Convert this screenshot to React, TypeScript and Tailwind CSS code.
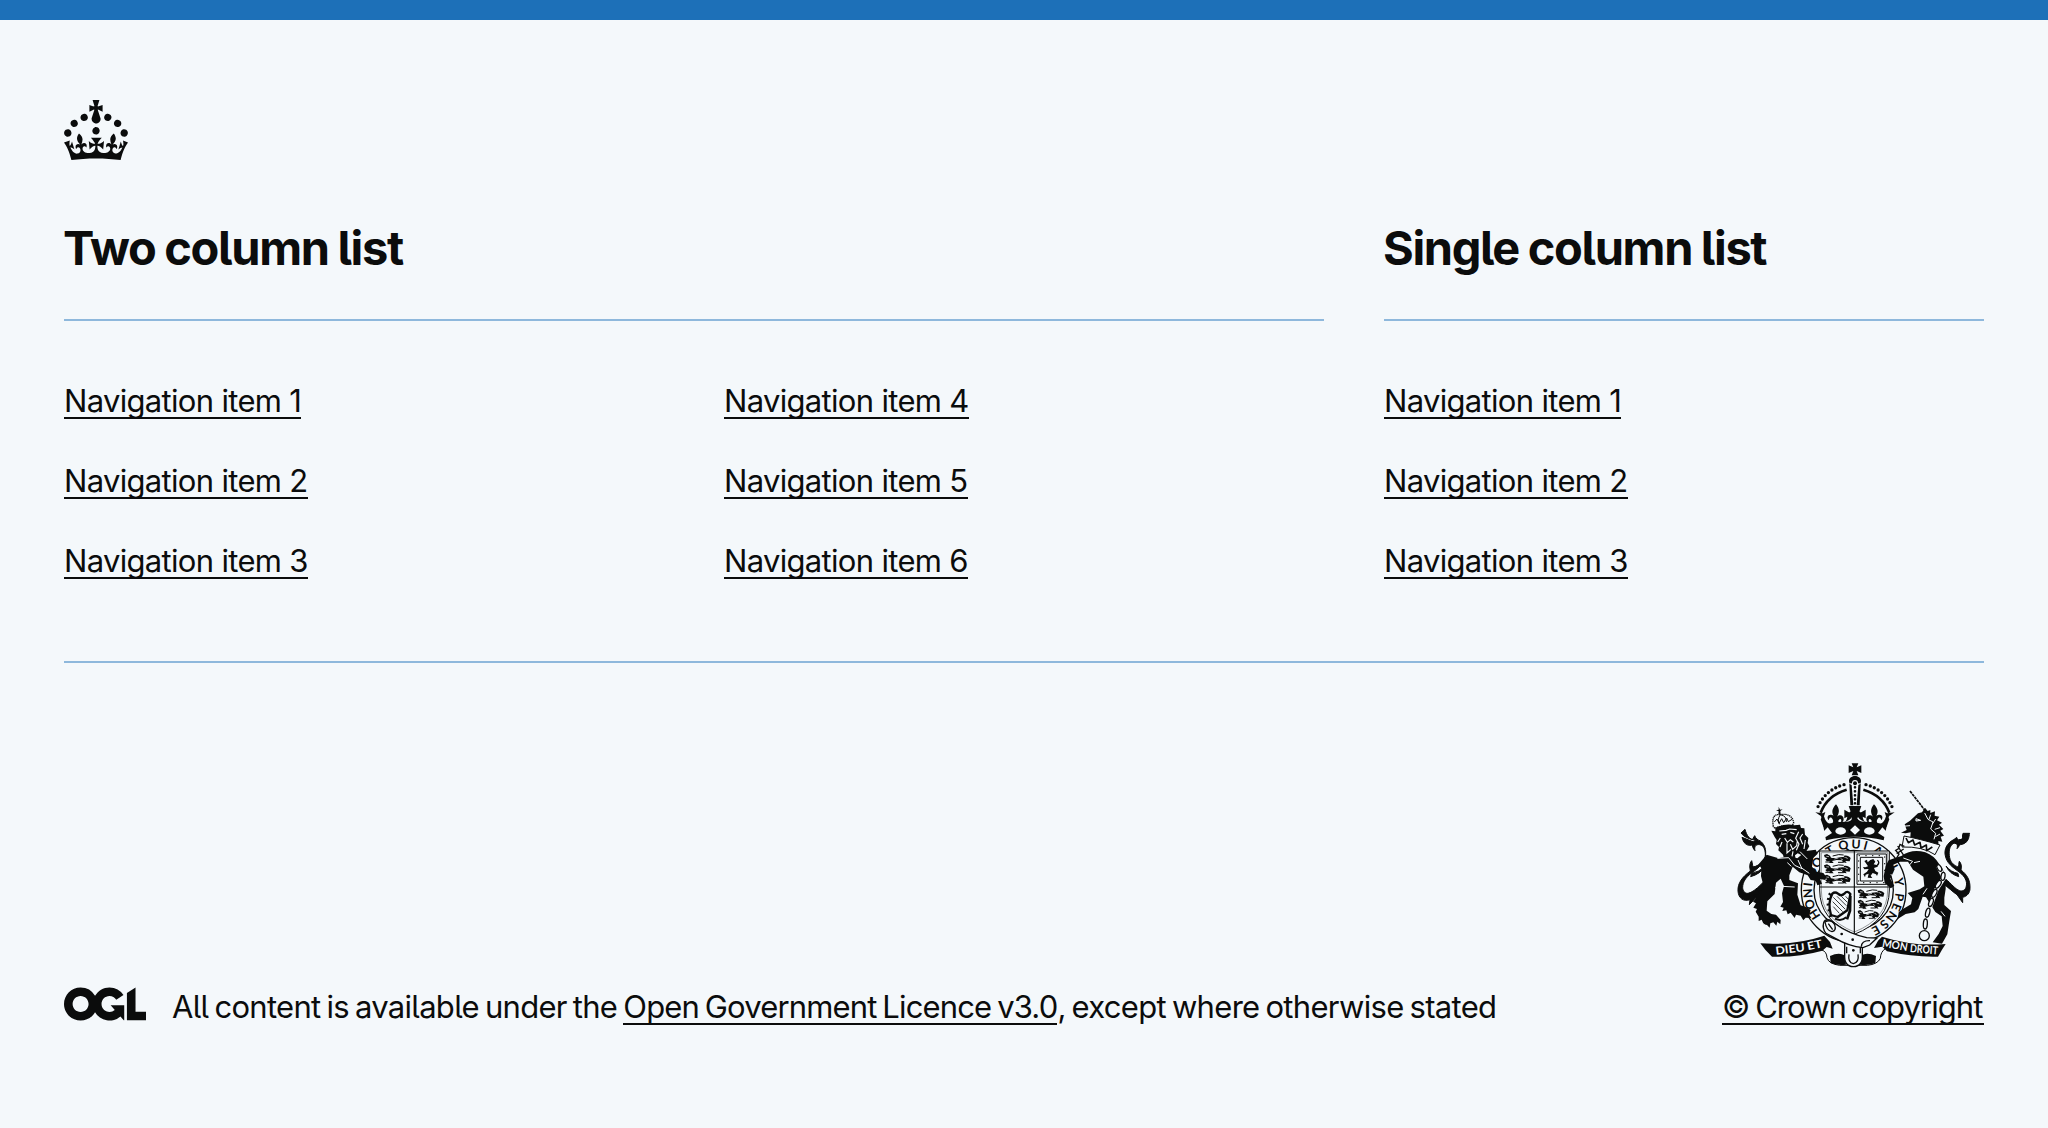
import React from "react";

const INK = "#0b0c0c";
const PAPER = "#f4f8fb";

function Crown() {
  return (
    <svg className="block h-[60px] w-16" viewBox="0 0 32 30" fill={INK} aria-hidden="true">
      <path
        fillRule="evenodd"
        d="M22.6 10.4c-1 .4-2-.1-2.4-1-.4-.9.1-2 1-2.4.9-.4 2 .1 2.4 1s-.1 2-1 2.4m-5.9 6.7c-.9.4-2-.1-2.4-1-.4-.9.1-2 1-2.4.9-.4 2 .1 2.4 1s-.1 2-1 2.4m10.8-3.7c-1 .4-2-.1-2.4-1-.4-.9.1-2 1-2.4.9-.4 2 .1 2.4 1s0 2-1 2.4m3.3 4.8c-1 .4-2-.1-2.4-1-.4-.9.1-2 1-2.4.9-.4 2 .1 2.4 1s-.1 2-1 2.4M17 4.7l2.3 1.2V2.5l-2.3.7-.2-.2.9-3h-3.4l.9 3-.2.2c-.1.1-2.3-.7-2.3-.7v3.4L15 4.7c.1.1.1.2.2.2l-1.3 4c-.1.2-.1.4-.1.6 0 1.1.8 2 1.9 2.2h.7c1-.2 1.9-1.1 1.9-2.1 0-.2 0-.4-.1-.6l-1.3-4c-.1-.2 0-.2.1-.3m-7.6 5.7c.9.4 2-.1 2.4-1 .4-.9-.1-2-1-2.4-.9-.4-2 .1-2.4 1s0 2 1 2.4m-5 3c.9.4 2-.1 2.4-1 .4-.9-.1-2-1-2.4-.9-.4-2 .1-2.4 1s.1 2 1 2.4m-3.2 4.8c.9.4 2-.1 2.4-1 .4-.9-.1-2-1-2.4-.9-.4-2 .1-2.4 1s0 2 1 2.4m14.8 11c4.4 0 8.6.3 12.3.8 1.1-4.5 2.4-7 3.7-8.8l-2.5-.9c.2 1.3.3 1.9 0 2.7-.4-.4-.8-1.1-1.1-2.3l-1.2 4c.7-.5 1.3-.8 2-.9-1.1 2.5-2.6 3.1-3.5 3-1.1-.2-1.7-1.2-1.5-2.1.3-1.2 1.5-1.5 2.1-.1 1.1-2.3-.8-3-2-2.3 1.9-1.9 2.1-3.5.6-5.6-2.1 1.6-2.1 3.2-1.2 5.5-1.2-1.4-3.2-.6-2.5 1.6.9-1.4 2.1-.5 1.9.8-.2 1.1-1.7 2.1-3.5 1.9-2.7-.2-2.9-2.1-2.9-3.6.7-.1 1.9.5 2.9 1.9l.4-4.3c-1.1 1.1-2.1 1.4-3.2 1.4.4-1.2 2.1-3 2.1-3h-5.4s1.7 1.9 2.1 3c-1.1 0-2.1-.2-3.2-1.4l.4 4.3c1-1.4 2.2-2 2.9-1.9-.1 1.5-.2 3.4-2.9 3.6-1.9.2-3.4-.8-3.5-1.9-.2-1.3 1-2.2 1.9-.8.7-2.3-1.2-3-2.5-1.6.9-2.2.9-3.9-1.2-5.5-1.5 2-1.3 3.7.6 5.6-1.2-.7-3.1 0-2 2.3.6-1.4 1.8-1.1 2.1.1.2.9-.3 1.9-1.5 2.1-.9.2-2.4-.5-3.5-3 .6 0 1.2.3 2 .9l-1.2-4c-.3 1.1-.7 1.9-1.1 2.3-.3-.8-.2-1.4 0-2.7l-2.9.9C1.3 23 2.6 25.5 3.7 30c3.7-.5 7.9-.8 12.3-.8"
      />
    </svg>
  );
}

function OglLogo() {
  return (
    <svg className="block h-[34px] w-[82px] shrink-0" viewBox="0 0 483.2 195.7" fill={INK} aria-hidden="true">
      <path d="M421.5 142.8V.1l-50.7 32.3v161.1h112.4v-50.7zm-122.3-9.6A47.12 47.12 0 0 1 221 97.8c0-26 21.1-47.1 47.1-47.1 16.7 0 31.4 8.7 39.7 21.8l42.7-27.2A97.63 97.63 0 0 0 268.1 0c-36.5 0-68.3 20.1-85.1 49.7A98 98 0 0 0 97.8 0C43.9 0 0 43.9 0 97.8s43.9 97.8 97.8 97.8c36.5 0 68.3-20.1 85.1-49.7a97.76 97.76 0 0 0 149.6 25.4l19.4 22.2h3v-87.8h-80l24.3 27.5zM97.8 145c-26 0-47.1-21.1-47.1-47.1s21.1-47.1 47.1-47.1 47.1 21.1 47.1 47.1S123.8 145 97.8 145" />
    </svg>
  );
}

/* Letters of the garter with their angle in degrees, clockwise from the top. */
const MOTTO: [string, number][] = [
  ["H", -122], ["O", -108], ["N", -94], ["I", -83], ["S", -65], ["O", -53], ["T", -31],
  ["Q", -13], ["U", 3], ["I", 15], ["A", 32], ["L", 62], ["Y", 80], ["P", 99],
  ["E", 112], ["N", 125], ["S", 138], ["E", 151],
];

/* Position and width factor of the lions in the first and fourth quarters. */
const PASSANT: [number, number, number][] = [
  [312, 312, 1], [312, 343, 1], [312, 374, 1],
  [413, 418, 1], [413, 449, 0.92], [413, 480, 0.8],
];

function CrownSide() {
  return (
    <g>
      <path d="M372 104Q312 120 290 180" fill="none" stroke={INK} strokeWidth="10" strokeLinecap="round" strokeDasharray="0 13.2" />
      <path d="M380 119Q322 136 302 188" fill="none" stroke={INK} strokeWidth="8" />
      <path d="M286 187l22 3 8-4-4 13c4 13 9 20 16 22 12 2 15-9 7-17-5-4-9 2-8 7-9-8-3-20 9-16 4 1 6 4 7 6-10-14-7-25 5-38 10 13 12 23 3 37 9-9 21-4 20 9-1 5-4 8-8 8 3-9-2-12-6-8-5 5 1 13 10 11 9-2 14-10 15-20l-9 5v-26l12 7c4 2 7 0 6-4l-5-14h29v62H310l-8-22c4-5 2-11-4-13z" />
      <path d="M397 203q-6 10-22 15" fill="none" stroke={PAPER} strokeWidth="4" />
    </g>
  );
}

function RoyalArms() {
  return (
    <svg className="block h-[230px] w-[262px]" viewBox="6 0 786 690" fill={INK} aria-hidden="true">
      {/* tails */}
      <g stroke={INK} strokeWidth="3" strokeLinejoin="round">
        <path d="M63 249c10 13 23 16 34 20l7-12c4 10 9 12 17 16 10 8 17 20 16 38-1 26-20 42-42 58-18 13-27 28-27 43 0 12 7 19 16 18 22-4 54-41 90-82l14 20c-33 33-57 59-81 76l-19 20 2-15c-21 7-34-5-36-25-2-25 14-44 37-61-2-12-4-20 4-31 3 8 1 13 5 18 7 1 14-5 28-13 6-7 9-15 8-25-1-15-5-26-17-28-13-2-17 7-14 18-12-13-9-24 1-32-18 0-26-14-31-32z" />
        <path d="M95 370q22-4 39-20-13 22-42 30zM66 262q6 26 27 24l18-6z" />
        <path d="M749 250c-8 14-20 20-34 24l-5-12c-7 7-14 9-20 14-10 9-16 20-15 36 3 28 24 40 45 56 14 11 22 25 19 40-2 12-11 17-20 14-14-5-25-21-42-35l-9 14c18 11 30 25 43 33l17 24v-16c14-3 22-14 22-27 1-25-9-41-27-55 3-13 0-20-5-26-3 7 0 14-4 17-11-5-22-12-25-28-4-19 0-35 10-42 10-6 16 3 12 15 11-10 9-20 4-27 20 0 9-7 14-19z" />
        <path d="M714 370q-22-4-36-22 11 24 38 32zM748 254q-2 26-26 30l-18-4z" />
      </g>
      {/* garter */}
      <circle cx="401" cy="420" r="157" fill={PAPER} stroke={INK} strokeWidth="4" />
      <circle cx="401" cy="420" r="119" fill={PAPER} stroke={INK} strokeWidth="4" />
      <g fontFamily="Lato, sans-serif" fontSize="37" fontWeight="700" textAnchor="middle">
        {MOTTO.map(([c, a], i) => (
          <text key={i} x="401" y="295" transform={`rotate(${a} 401 420)`}>{c}</text>
        ))}
      </g>
      {/* royal crown */}
      <path d="M395 40h20l-5 12 14-6v23l-14-6 5 13h-20l5-13-14 6v-23l14 6z" />
      <path d="M405 78c11 0 18 7 18 15 0 6-3 9-6 13h-24c-3-4-6-7-6-13 0-8 7-15 18-15z" />
      <path d="M389 100h32v66h-32z" fill={PAPER} />
      <path d="M388 101l7 4 5 61h-9zM422 101l-7 4-5 61h9z" />
      <circle cx="405" cy="99" r="9" fill={PAPER} />
      <circle cx="405" cy="100" r="6" />
      <path d="M405 112v50" stroke={INK} strokeWidth="8" strokeLinecap="round" strokeDasharray="0 12" />
      <CrownSide />
      <g transform="matrix(-1 0 0 1 810 0)"><CrownSide /></g>
      <path d="M309 224q96-20 192 0l-10 47q-85-22-173 0z" />
      <path d="M405 226l15 14-15 14-15-14zM323 232l13 17-20 13-6-17zM487 232l-13 17 20 13 6-17z" fill={PAPER} />
      <ellipse cx="362" cy="243" rx="16" ry="11" fill={PAPER} />
      <ellipse cx="448" cy="243" rx="16" ry="11" fill={PAPER} />
      {/* shield */}
      <path d="M299 303h209v117q0 92-105 133-104-41-104-133z" fill={PAPER} stroke={INK} strokeWidth="3" />
      <path d="M304 308h199v112q0 86-100 126-99-40-99-126z" fill="none" stroke={INK} strokeWidth="1.2" />
      <path d="M403 303v249M299 411h209" stroke={INK} strokeWidth="3.5" />
      {PASSANT.map(([x, y, s], i) => (
        <g key={i} transform={`translate(${x} ${y}) scale(${s} 1)`}>
          <path d="M0 3l9-3 9 5 3 6c13 4 25-3 37-2 8 1 9 5 14 5-2-5-12-2-13-8 8-4 16 1 21 6l-3 10-13-1 4 6-11-2-4-6-15-1-14 3 5 6H16l1-6-8 1-5-5 6-4-8-3z" />
          <path d="M26 6q20-7 33-3M4 24h18M42 25h17" fill="none" stroke={INK} strokeWidth="3" />
          <path d="M7 7l8 1M31 15l12-3M50 14l7 4" stroke={PAPER} strokeWidth="2" />
        </g>
      ))}
      <path d="M411 312h88v91h-88z" fill="none" stroke={INK} strokeWidth="3" />
      <path d="M421 322h67v71h-67z" fill="none" stroke={INK} strokeWidth="3" />
      <path d="M416 317h78v81h-78z" fill="none" stroke={INK} strokeWidth="3" strokeDasharray="4 16" />
      <path d="M433 333l8-4 2 8 8-7 9-3 6 8-5 8 9 2 5-6-2 11-11 4 4 9 9 5-4 10-3-5-10-4-6 8 5 7-14-1 3-12-9 3-2 8-5-9 11-8 5-8-13 1-4-7 7 1 8-3-4-6z" />
      <path d="M472 331q8 6 1 14" fill="none" stroke={INK} strokeWidth="4" />
      {/* harp */}
      <path d="M337 431q-15 28-4 64l20 6 29-20 9-49q-9-12-18-1-10 9-19 0-9-7-17 0z" fill={PAPER} stroke={INK} strokeWidth="7" strokeLinejoin="round" />
      <path d="M340 470l18 20M338 455l30 30M340 442l36 36M351 439l28 28M364 439l18 18M377 439l8 9" stroke={INK} strokeWidth="2.4" />
      <path d="M326 430l8 6M321 446l9 2M320 464l9-1M323 482l8-3M327 500l10-4" stroke={INK} strokeWidth="6" />
      <path d="M391 438l-1 44-9 26" fill="none" stroke={INK} strokeWidth="8" />
      <path d="M345 506q18 9 34-4" fill="none" stroke={INK} strokeWidth="6" />
      {/* lion */}
      <path d="M176 170l4 9 8-1-7 5 1 11h-7l1-10-8-3 8-2z" />
      <path d="M160 230q-7-39 19-36 38-6 42 25l-5 9q-30-4-51 7z" fill={PAPER} stroke={INK} strokeWidth="4" strokeDasharray="4 2" />
      <path d="M163 216l8-9 6 13 8-14 6 12 9-14 5 11 11-7M181 194q-11 16-2 29M181 194q20 4 18 22" fill="none" stroke={INK} strokeWidth="3" />
      <path d="M166 234q31-15 57-8l17-2 3 10 10 1 2 19 10 10-2 15 5 10-12 20-4 10-19-9-8 6 2 12-22-4-12 6-4-16-14-13 2-10-9-9 2-12-6-9-10-19 12 2z" />
      <path d="M178 243l20-2 11-4 21 2M185 253l14-2M211 247l12 4M194 264l8 13 9-8 9 7M181 264l-8 12M186 276l-6 15M211 283l7 15 12-11 2-14M236 245l-9 20 10 17-8 19M248 252l-8 12 8 19M201 280v29l12-11M219 304l-3 15M256 270l-4 27" fill="none" stroke={PAPER} strokeWidth="3.5" />
      <path d="M176 325l30-7 26 7 26-22 29-4 6 12-13 12-4 27 14 15 20 4 9 12-3 9-16-3 6 14-14 5-5-14-15-2-9-14-25-9-20-17-10 26 0 14 26 10-2 34 10 32 18 6 12 8-4 14 6 10-17-1-7 8-8-14-14-3-4 10-12-16-9 5-4-12-12 2 4-10-10-3 8-14-3-26 6-22-10-22-14 12-4 34-22 22-2 28 14 10 14 2 14 16-1 13-9-8-3 12-9-10-9 3-2 13-8-8-10-2-6-14-9 4 0-13-9-15 4-8-11-4 8-13-9-5 9-11-8-9 18-2-2-9 16-6-3-17-6-22 1-24-8-12 24-29z" />
      <path d="M172 325l34-2 18 23 22 10M214 349l-12-11M234 330l11 24 23 16M174 404l-7 8 10 17 4 24M240 305l22 22M186 409l38 2M128 520l15 12" fill="none" stroke={PAPER} strokeWidth="3" />
      {/* unicorn */}
      <path d="M570 123l44 57" stroke={INK} strokeWidth="5" strokeDasharray="9 2" />
      <path d="M554 223l16-11 24-22 12-3 9-14 8 10 8-3 0 9 14-5-1 13 14 3-7 11 15 7-9 6 13 13-9 5 11 15-10 3 5 15-12-2 1 17-13-3-19 10-25-12-29-10 2-28-15 3-14-2 17-8z" />
      <path d="M588 206l14 5-14 2zM614 189l10 19 15 8-7 21 15 13-5 18M632 194l-5 14M647 207l-9 14M660 233l-16 5M660 252l-14 8M546 229l24-2" fill="none" stroke={PAPER} strokeWidth="3" />
      <path d="M552 258q45 8 108 27l-15 29q-37-25-99-23z" fill={PAPER} stroke={INK} strokeWidth="3" />
      <path d="M558 264l7 14 14-8 5 15 16-8 3 17 16-9 1 17 17-11" fill="none" stroke={INK} strokeWidth="5" strokeLinejoin="round" />
      <path d="M553 289l-13-6-4 13-9 5 10 11-7 12M533 288l18 28M551 297l-21 14" fill="none" stroke={INK} strokeWidth="4" />
      <path d="M544 318q32-23 72-11 26 9 42 36 18 22 19 50 2 25-4 50l0 22 20 18-5 30-6 40-16 28-28-4 18-25 12-24-3-29-19-13-28-44-10-2-13 37-11 10-27 5-24 15 3-20 13-10 24-14 4-19-14-15 36-11 14-9-3-29-31-21-15-24-24 0-20 9 4 14-13 28 12 22-11 7-18-16-3-20 6-31 9-17 21-8z" />
      <path d="M550 324l28 10-15 17M582 338l18-4M621 415l-12 18M663 484l12 15M512 374l15 6M658 525l-8 22" fill="none" stroke={PAPER} strokeWidth="3" />
      <path d="M654 347l18 36-23 36-22 60-12 66" fill="none" stroke={PAPER} strokeWidth="13" />
      <g fill={PAPER} stroke={INK} strokeWidth="4">
        <ellipse cx="658" cy="354" rx="6" ry="11" transform="rotate(-30 658 354)" />
        <ellipse cx="669" cy="379" rx="6" ry="12" transform="rotate(8 669 379)" />
        <ellipse cx="655" cy="403" rx="6" ry="13" transform="rotate(33 655 403)" />
        <ellipse cx="643" cy="430" rx="6" ry="13" transform="rotate(27 643 430)" />
        <ellipse cx="633" cy="457" rx="6" ry="13" transform="rotate(20 633 457)" />
        <ellipse cx="623" cy="488" rx="6" ry="14" transform="rotate(14 623 488)" />
        <ellipse cx="616" cy="522" rx="6" ry="15" transform="rotate(4 616 522)" />
        <circle cx="613" cy="557" r="15" />
      </g>
      {/* compartment */}
      <path d="M306 600q14 5 15 23 5 19 38 23h83q31-3 39-21 1-20 15-29" fill={PAPER} stroke={INK} strokeWidth="3" />
      <path d="M330 618q27-12 44-2l4 28q-28 3-46-5zM468 618q-27-12-44-2l-4 28q28 3 46-5z" />
      <path d="M374 577h53v37q2 35-27 36-28-1-26-36z" fill={PAPER} stroke={INK} strokeWidth="4" />
      <path d="M387 613q-4 25 13 28 18-4 14-28M380 590v20M421 590v20" fill="none" stroke={INK} strokeWidth="4" />
      <circle cx="400" cy="601" r="4" />
      {/* belt */}
      <path d="M311 518q4-11 18-8l18 12q37 28 93 41l31 1-22 21-20 8q-42-4-83-28l-28-15q-12-14-7-32z" fill={PAPER} stroke={INK} strokeWidth="4" />
      <path d="M315 516q19-10 29 8 6 19-8 21-16-2-21-29zM325 521l13 18M424 590q1-19 26-18" fill="none" stroke={INK} strokeWidth="4" />
      <circle cx="365" cy="552" r="4" />
      <circle cx="398" cy="569" r="4" />
      {/* motto scroll */}
      <path d="M121 580q102 7 192-23l17 19 8 20-18-5-13 11q-71 20-151 18-22-20-35-40zM677 582q-97 8-191-22l-12 12-12 22 25-4 14 14q80 18 153 16 11-20 23-38z" />
      <g fill={PAPER} fontFamily="Lato, sans-serif" fontSize="33" fontWeight="700">
        <text x="168" y="614" textLength="88" lengthAdjust="spacingAndGlyphs" transform="rotate(-7 168 614)">DIEU</text>
        <text x="264" y="601" textLength="45" lengthAdjust="spacingAndGlyphs" transform="rotate(-12 264 601)">ET</text>
        <text x="485" y="590" textLength="77" lengthAdjust="spacingAndGlyphs" transform="rotate(10 485 590)">MON</text>
        <text x="569" y="606" textLength="84" lengthAdjust="spacingAndGlyphs" transform="rotate(5 569 606)">DROIT</text>
      </g>
    </svg>
  );
}

const LINK = "border-b-2 border-[#0b0c0c]";

function NavItem({ children }: { children: string }) {
  return (
    <li className="flex h-20 items-start">
      <a href="#" className={`h-[37px] whitespace-nowrap leading-[38px] ${LINK}`}>{children}</a>
    </li>
  );
}

function NavList({ items }: { items: number[] }) {
  return (
    <ul className="tracking-[-0.68px]">
      {items.map((n) => <NavItem key={n}>{`Navigation item ${n}`}</NavItem>)}
    </ul>
  );
}

function Heading({ children }: { children: string }) {
  return (
    <h2 className="-ml-px flex h-[101px] whitespace-nowrap text-[47px] leading-[56px] font-bold tracking-[-1.35px] [word-spacing:-1px]">
      {children}
    </h2>
  );
}

export default function App() {
  return (
    <footer className="h-[1128px] w-[2048px] overflow-hidden border-t-20 border-[#1d70b8] bg-[#f4f8fb] px-16 pt-20 font-[Inter,sans-serif] text-[31px] text-[#0b0c0c] [font-feature-settings:'cv05'_1]">
      <Crown />
      <div className="mt-[60px] grid grid-cols-[1260px_600px] gap-[60px]">
        <section>
          <div className="h-[101px] border-b-2 border-[#8eb8dc]">
            <Heading>Two column list</Heading>
          </div>
          <div className="mt-[61px] grid grid-cols-2 gap-[60px]">
            <NavList items={[1, 2, 3]} />
            <NavList items={[4, 5, 6]} />
          </div>
        </section>
        <section>
          <div className="h-[101px] border-b-2 border-[#8eb8dc]">
            <Heading>Single column list</Heading>
          </div>
          <div className="mt-[61px]">
            <NavList items={[1, 2, 3]} />
          </div>
        </section>
      </div>
      <hr className="mt-[39px] border-t-2 border-[#8eb8dc]" />
      <div className="mt-[87px] flex items-end justify-between">
        <div className="flex items-start">
          <div className="pt-px">
            <OglLogo />
          </div>
          <p className="ml-[26px] flex h-[39px] whitespace-pre leading-[41px] tracking-[-0.7px] [word-spacing:-2px]">
            <span>All content is available under the </span>
            <a href="#" className={`h-[39px] tracking-[-0.85px] ${LINK}`}>Open Government Licence v3.0</a>
            <span>, except where otherwise stated</span>
          </p>
        </div>
        <a href="#" className="flex w-[262px] flex-col">
          <RoyalArms />
          <span className={`mt-[6px] h-[39px] whitespace-nowrap leading-[41px] tracking-[-0.95px] [word-spacing:-2px] ${LINK}`}>© Crown copyright</span>
        </a>
      </div>
    </footer>
  );
}
